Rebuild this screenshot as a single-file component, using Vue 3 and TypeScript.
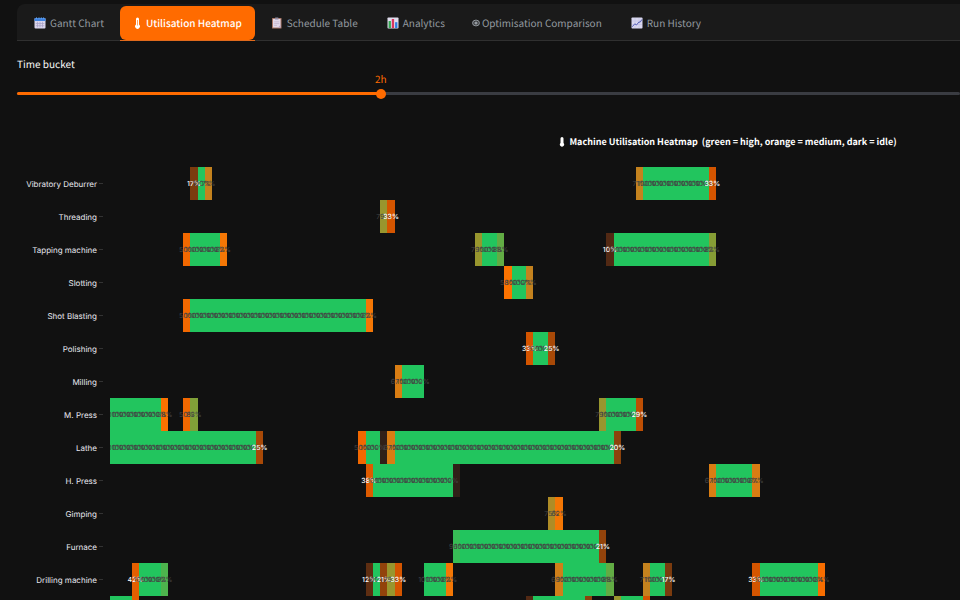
<script setup lang="ts">
import { computed, ref } from 'vue'

interface Tab { id: string; label: string }
interface Run { start: number; values: number[] }
interface Machine { name: string; runs: Run[] }
interface Cell { key: string; x: number; y: number; value: number; label: string }

const tabs: Tab[] = [
  { id: 'gantt', label: 'Gantt Chart' },
  { id: 'heat', label: 'Utilisation Heatmap' },
  { id: 'table', label: 'Schedule Table' },
  { id: 'stats', label: 'Analytics' },
  { id: 'compare', label: 'Optimisation Comparison' },
  { id: 'history', label: 'Run History' },
]
const active = ref('heat')

const minHours = 1
const maxHours = 3.6
const hours = ref(2)
const ratio = computed(() => (hours.value - minHours) / (maxHours - minHours))
const thumb = computed(() => `calc(5px + ${ratio.value} * (100% - 10px))`)

const full = (n: number): number[] => Array.from({ length: n }, () => 100)

const machines: Machine[] = [
  { name: 'Vibratory Deburrer', runs: [{ start: 11, values: [17, 100, 71] }, { start: 72, values: [71, ...full(9), 33] }] },
  { name: 'Threading', runs: [{ start: 37, values: [79, 33] }] },
  { name: 'Tapping machine', runs: [
    { start: 10, values: [50, ...full(4), 62] },
    { start: 50, values: [79, 100, 100, 88] },
    { start: 68, values: [10, ...full(13), 82] },
  ] },
  { name: 'Slotting', runs: [{ start: 54, values: [58, 100, 100, 71] }] },
  { name: 'Shot Blasting', runs: [{ start: 10, values: [50, ...full(24), 62] }] },
  { name: 'Polishing', runs: [{ start: 57, values: [33, 100, 100, 25] }] },
  { name: 'Milling', runs: [{ start: 39, values: [67, ...full(3)] }] },
  { name: 'M. Press', runs: [
    { start: 0, values: [...full(7), 58] },
    { start: 10, values: [50, 83] },
    { start: 67, values: [79, ...full(4), 29] },
  ] },
  { name: 'Lathe', runs: [
    { start: 0, values: [...full(20), 25] },
    { start: 34, values: [50, 100, 100, 4, 67, ...full(30), 20] },
  ] },
  { name: 'H. Press', runs: [
    { start: 35, values: [38, ...full(11), 4] },
    { start: 82, values: [67, ...full(5), 67] },
  ] },
  { name: 'Gimping', runs: [{ start: 60, values: [75, 62] }] },
  { name: 'Furnace', runs: [{ start: 47, values: [96, ...full(19), 21] }] },
  { name: 'Drilling machine', runs: [
    { start: 3, values: [42, ...full(3), 92] },
    { start: 35, values: [12, 100, 21, 79, 33] },
    { start: 43, values: [...full(3), 62] },
    { start: 61, values: [69, ...full(6), 88] },
    { start: 73, values: [71, 100, 100, 17] },
    { start: 88, values: [33, ...full(8), 54] },
  ] },
  { name: '', runs: [
    { start: 0, values: [...full(3), 42] },
    { start: 57, values: [10, ...full(7), 20] },
    { start: 69, values: [79, ...full(3), 33] },
  ] },
]

const plotWidth = 1241
const buckets = 170
const rowHeight = 33
const columnWidth = plotWidth / buckets

const cells: Cell[] = machines.flatMap((machine, row) =>
  machine.runs.flatMap((run) =>
    run.values.map((value, i) => ({
      key: `${row}-${run.start + i}`,
      x: (run.start + i) * columnWidth,
      y: row * rowHeight,
      value,
      label: value >= 10 && machine.name ? `${value}%` : '',
    })),
  ),
)
const labelled = cells.filter((cell) => cell.label)

const scale: [number, number[]][] = [
  [0, [26, 26, 26]],
  [10, [82, 41, 20]],
  [20, [140, 66, 12]],
  [33, [212, 85, 0]],
  [50, [242, 104, 0]],
  [60, [255, 116, 0]],
  [71, [196, 130, 30]],
  [79, [152, 150, 46]],
  [88, [98, 172, 68]],
  [100, [34, 197, 94]],
]

function colour(value: number): string {
  const hi = Math.max(1, scale.findIndex(([stop]) => stop >= value))
  const [from, a] = scale[hi - 1]
  const [to, b] = scale[hi]
  const t = (value - from) / (to - from)
  return `rgb(${a.map((c, i) => Math.round(c + (b[i] - c) * t)).join(',')})`
}
</script>

<template>
  <main class="page">
    <nav class="tabs" role="tablist" aria-label="Views">
      <button
        v-for="tab in tabs"
        :key="tab.id"
        type="button"
        role="tab"
        class="tab"
        :class="[{ active: tab.id === active }, tab.id]"
        :aria-selected="tab.id === active"
        @click="active = tab.id"
      >
        <svg v-if="tab.id === 'gantt'" class="icon" viewBox="0 0 12 12" aria-hidden="true">
          <rect x="0.5" y="1" width="11" height="10.5" rx="1" fill="#d9d6ec" />
          <path d="M.5 4V2a1 1 0 0 1 1-1h9a1 1 0 0 1 1 1v2z" fill="#3f83e0" />
          <path d="M2.5 .3v1.7M5 .3v1.7M7.3 .3v1.7M9.6 .3v1.7" stroke="#6aa9f2" stroke-width=".8" />
          <path d="M3.5 4.8v5.5M6 4.8v5.5M8.5 4.8v5.5M1.8 6.5h8.5M1.8 8.7h8.5" stroke="#a69fc6" stroke-width=".7" />
        </svg>
        <svg v-else-if="tab.id === 'heat'" class="icon narrow" viewBox="0 0 9 12" aria-hidden="true">
          <path d="M3 2a1.5 1.5 0 0 1 3 0v5.5a2.4 2.4 0 1 1-3 0z" fill="#fff" />
          <path d="M4.5 3v5.5" stroke="#ff6b00" stroke-width=".6" />
        </svg>
        <svg v-else-if="tab.id === 'table'" class="icon" viewBox="0 0 12 12" aria-hidden="true">
          <rect x="1" y="1" width="9.5" height="10.5" rx=".6" fill="#a97868" />
          <rect x="2" y="2" width="7.5" height="8.5" fill="#e3d9ea" />
          <rect x="4" y=".4" width="3.5" height="2.2" rx=".5" fill="#8f8aa0" />
          <path d="M3.2 4.8h5M3.2 6.6h5M3.2 8.4h2.8" stroke="#b9aac6" stroke-width=".6" />
          <path d="M7 10.5l2.5-2.5v2.5z" fill="#b8a6c9" />
        </svg>
        <svg v-else-if="tab.id === 'stats'" class="icon" viewBox="0 0 12 12" aria-hidden="true">
          <rect x=".5" y=".5" width="11" height="11" rx=".8" fill="#dfdced" />
          <rect x="1.6" y="4" width="2.3" height="7" fill="#35a852" />
          <rect x="4.8" y="2" width="2.3" height="9" fill="#d8365f" />
          <rect x="8.1" y="5.2" width="2.3" height="5.8" fill="#2d7fe0" />
        </svg>
        <svg v-else-if="tab.id === 'compare'" class="icon small" viewBox="0 0 8 12" aria-hidden="true">
          <ellipse cx="4" cy="6" rx="3.4" ry="2.9" fill="none" stroke="#949aa0" stroke-width="1" />
          <ellipse cx="4" cy="6" rx="1.6" ry="1.5" fill="#949aa0" />
          <path d="M.6 5h6.8M.6 7h6.8" stroke="#949aa0" stroke-width=".5" />
        </svg>
        <svg v-else class="icon" viewBox="0 0 12 12" aria-hidden="true">
          <rect x=".5" y=".5" width="11" height="11" rx=".8" fill="#d9d7ef" />
          <path d="M1 4h10M1 7.5h10M4 1v10M8 1v10" stroke="#bfbce0" stroke-width=".5" />
          <path d="M1.2 9.8l2.6-3 1.7 1.2 2.5-3.2 1 .6 2-3" fill="none" stroke="#5862b8" stroke-width="1" />
        </svg>
        <span>{{ tab.label }}</span>
      </button>
    </nav>

    <section class="bucket">
      <label for="bucket">Time bucket</label>
      <div class="slider">
        <output for="bucket" class="value" :style="{ left: thumb }">{{ hours }}h</output>
        <div class="track"><div class="fill" :style="{ width: thumb }"></div></div>
        <input id="bucket" v-model.number="hours" type="range" :min="minHours" :max="maxHours" step="0.2" />
      </div>
    </section>

    <figure class="chart">
      <figcaption>
        <svg class="thermo" viewBox="0 0 6 10" aria-hidden="true">
          <path d="M1.5 1.5a1.5 1.5 0 0 1 3 0v4.5a2.1 2.1 0 1 1-3 0z" fill="#fff" />
        </svg>
        <span>Machine Utilisation Heatmap&nbsp; (green = high, orange = medium, dark = idle)</span>
      </figcaption>
      <ul class="names">
        <li v-for="(machine, i) in machines" :key="i">{{ machine.name }}</li>
      </ul>
      <svg class="plot" :width="plotWidth" :height="machines.length * rowHeight" role="img" aria-label="Machine utilisation">
        <rect
          v-for="cell in cells"
          :key="cell.key"
          :x="cell.x"
          :y="cell.y"
          :width="columnWidth"
          :height="rowHeight"
          :fill="colour(cell.value)"
        />
        <text
          v-for="cell in labelled"
          :key="cell.key"
          :class="{ light: cell.value < 45 }"
          :x="cell.x + columnWidth / 2"
          :y="cell.y + 19"
        >{{ cell.label }}</text>
      </svg>
    </figure>
  </main>
</template>

<style>
body {
  background: #111;
}
</style>

<style scoped>
.page {
  box-sizing: border-box;
  height: 100vh;
  overflow: hidden;
  padding: 4px 0 0 17px;
  background: #111;
  color: #fafafa;
  font-family: "Noto Sans CJK JP", "Noto Sans", sans-serif;
  font-size: 10px;
  line-height: 16px;
  text-rendering: geometricPrecision;
}
.tabs {
  display: flex;
  gap: 3px;
  padding: 2px 4px 0;
  background: #1a1a1a;
  border-bottom: 1px solid #303030;
  border-radius: 8px 0 0 0;
}
.tab {
  position: relative;
  display: flex;
  align-items: center;
  gap: 4px;
  height: 34px;
  padding: 0 13px;
  border: 0;
  border-radius: 6px;
  background: none;
  color: #949aa0;
  font: inherit;
  text-rendering: inherit;
  white-space: nowrap;
  cursor: pointer;
}
.tab.active {
  background: #ff6b00;
  color: #fff;
  font-weight: 500;
}
.tab.active::after {
  content: "";
  position: absolute;
  left: 0;
  right: 0;
  bottom: -1px;
  height: 1px;
  background: #e06a1c;
}
.tab.compare {
  gap: 2px;
  padding: 0 13px 0 11px;
}
.icon {
  width: 12px;
  height: 12px;
}
.icon.narrow {
  width: 9px;
}
.icon.small {
  width: 8px;
}
.bucket {
  padding-top: 15px;
}
.bucket label {
  display: block;
}
.slider {
  position: relative;
  padding-top: 16px;
}
.value {
  position: absolute;
  top: -1px;
  transform: translateX(-50%);
  color: #ff6b00;
}
.track {
  height: 3px;
  margin-top: 4px;
  background: #3a3c42;
  border-radius: 2px;
}
.fill {
  height: 100%;
  background: #ff6b00;
  border-radius: 2px;
}
input[type="range"] {
  appearance: none;
  position: absolute;
  left: 0;
  bottom: -4px;
  width: 100%;
  height: 10px;
  margin: 0;
  background: transparent;
}
input[type="range"]::-webkit-slider-thumb {
  appearance: none;
  width: 10px;
  height: 10px;
  border: 0;
  border-radius: 50%;
  background: #ff6b00;
}
.chart {
  display: grid;
  grid-template-columns: 93px 1fr;
  width: 1422px;
  margin: 39px 0 0;
}
figcaption {
  grid-column: 1 / -1;
  display: flex;
  justify-content: center;
  align-items: center;
  gap: 4px;
  height: 16px;
  margin-bottom: 17px;
  color: #fff;
  font-size: 9px;
  font-weight: 700;
}
.thermo {
  width: 6px;
  height: 10px;
}
.names {
  margin: 0;
  padding: 0 7px 0 0;
  list-style: none;
  font-family: Inter, sans-serif;
  font-size: 8px;
  color: #e8e8f0;
}
.names li {
  display: flex;
  align-items: center;
  justify-content: flex-end;
  gap: 2px;
  height: 33px;
  white-space: nowrap;
}
.names li::after {
  content: "";
  width: 4px;
  height: 1px;
  background: #333;
}
.plot {
  display: block;
}
.plot rect {
  shape-rendering: crispEdges;
}
.plot text {
  fill: #444;
  font-family: Inter, sans-serif;
  font-size: 7px;
  text-anchor: middle;
}
.plot text.light {
  fill: #fff;
  font-weight: 500;
}
</style>
